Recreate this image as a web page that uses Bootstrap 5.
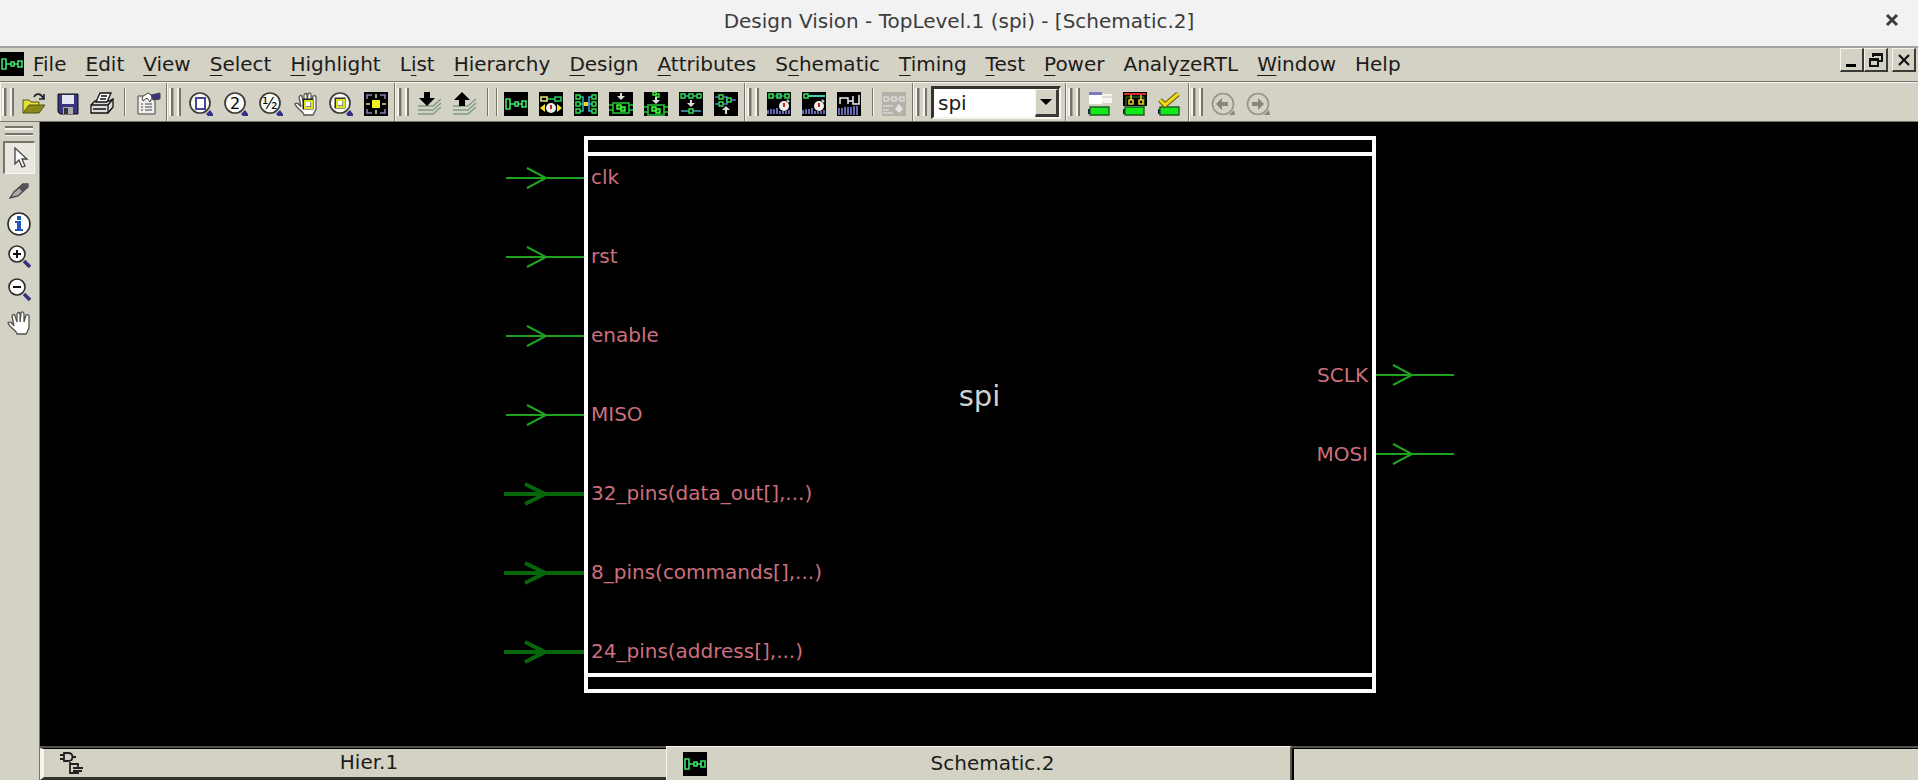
<!DOCTYPE html>
<html lang="en">
<head>
<meta charset="utf-8">
<meta name="viewport" content="width=device-width, initial-scale=1">
<title>Design Vision - TopLevel.1 (spi) - [Schematic.2]</title>
<link href="https://cdn.jsdelivr.net/npm/bootstrap@5.3.0/dist/css/bootstrap.min.css" rel="stylesheet">
<style>
:root{--face:#d4d1c5;--edge:#77756b;--hi:#f6f4ec}
body{font-family:"DejaVu Sans",sans-serif;font-size:20px;line-height:24px;color:#1c1c1a;background:var(--face)}
button{color:inherit;font:inherit}
svg{display:block;flex:none}
.titlebar{height:48px;background:#f2f2f2;border-bottom:2px solid #a3a3a3;color:#3c3c3c;padding-bottom:5px}
.titlebar h1{font-size:20px;line-height:24px}
.win-close{right:14px;top:8px}
.menubar{height:34px;border-bottom:1px solid var(--edge);padding-bottom:2px}
.menubar .nav-link{padding:0 10px 0 9px;color:#1c1c1a;line-height:24px}
.menubar u{text-underline-offset:4px;text-decoration-thickness:1px;text-decoration-skip-ink:none}
.mdi-set{padding-right:2px}
.mdi{width:24px;height:24px;background:var(--face);border:solid;border-width:1px 2px 2px 1px;border-color:var(--hi) #3a3a36 #3a3a36 var(--hi);padding:0}
.tool{background:none;border:0;padding:0;width:24px;height:24px;flex:none}
.toolbar{height:40px;border-top:1px solid var(--hi);border-bottom:1px solid var(--edge)}
.toolbar .tool{height:28px;padding-top:4px}
.group{border-right:1px solid var(--edge);padding:0 6px 0 4px;box-shadow:inset 1px 0 var(--hi)}
.tool-row{gap:11px}
.tool-row.tight{gap:10px}
.grip{width:10px;height:28px;flex:none;border:solid;border-width:0 2px;border-color:var(--edge);box-shadow:inset 1px 0 #a9a69b,inset -2px 0 var(--hi),-2px 0 var(--hi)}
.divide{width:2px;height:28px;flex:none;background:linear-gradient(90deg,var(--edge) 50%,var(--hi) 50%)}
.divide-pair{margin:0 6px 0 7px}
.combo{width:130px;height:33px;border:solid;border-width:3px 2px 2px 3px;border-color:#33332f var(--hi) var(--hi) #33332f;border-radius:0;font-size:20px;line-height:24px;padding:0 0 0 4px;background:#fff;appearance:none;color:#1c1c1a}
.combo-arrow{right:2px;top:3px;width:24px;height:28px;background:var(--face);border:solid;border-width:1px 3px 3px 1px;border-color:var(--hi) #3a3a36 #3a3a36 var(--hi);pointer-events:none}
.rail{width:40px;border-right:1px solid var(--edge);padding:4px 3px 0 2px}
.rail .handle{width:28px;height:9px;margin-bottom:6px;border:solid;border-width:2px 0;border-color:var(--edge);box-shadow:inset 0 2px var(--hi),0 1px var(--hi)}
.rail .tool{width:32px;height:33px;display:flex;align-items:center;justify-content:center}
.rail .tool.pressed{background:#e9e7df;border:solid;border-width:2px 1px 1px 2px;border-color:var(--edge) var(--hi) var(--hi) var(--edge)}
.canvas{background:#000;padding:14px 0 52px}
.module{width:792px;height:557px;border:4px solid #fff;color:#d0d0d0}
.stripe{height:16px}
.stripe-top{border-bottom:4px solid #fff}
.stripe-bottom{border-top:4px solid #fff}
.pins{display:grid;grid-auto-rows:28px;row-gap:51px;align-content:start;color:#cd6f7d;line-height:28px}
.wires-in{padding-top:28px}
.wires-out{padding-top:225px}
.names-in{padding:7px 0 0 3px}
.names-out{padding:205px 4px 0 0}
.cell-name{font-size:29px;line-height:36px;padding-bottom:38px}
.net{fill:none;stroke:#1fa31f;stroke-width:2}
.bus{fill:none;stroke:#07650a;stroke-width:4}
.tabs{height:34px;border-top:2px solid #55534e}
.tab{border:0;background:var(--face);padding:0 0 2px 28px}
.tab-back{border-top:1px solid #000;border-left:4px solid var(--hi);border-bottom:3px solid #33332e}
.tab-front{border-left:1px solid var(--hi);margin-top:-2px;border-top:1px solid var(--hi);border-right:2px solid #55534e}
.tab-rest{border-left:2px solid #000;border-top:1px solid #000}
.tab-icon{left:16px;top:2px}
.tab-front .tab-icon{top:5px}
</style>
</head>
<body class="d-flex flex-column min-vh-100">
<svg width="0" height="0" class="position-absolute" aria-hidden="true">
  <defs>
    <symbol id="i-schem" viewBox="0 0 24 24"><path fill="#000" d="M0 0h24v24H0z"/><path d="M2 7h4v10H2zM6 12h5M11 10h3v4h-3zM14 12h4M18 9h4v6h-4z" fill="none" stroke="#3be36b" stroke-width="1.6"/></symbol>
    <symbol id="i-lens" viewBox="0 0 24 24"><circle cx="11" cy="11" r="10" fill="#fbfbf6" stroke="#3b3b39" stroke-width="1.7"/><path d="M17 22l4-4 3 4v2h-5z" fill="#34308a"/></symbol>
    <symbol id="i-hand" viewBox="0 0 24 24"><path d="M10 23c0-3-7-6-9-11 2-2 4 0 6 3L5 5c1-2 3-2 3 0l2 6V3c1-2 3-2 3 0v8l1-9c1-2 3-1 3 1v8l2-7c2-1 3 0 3 2v11l-3 6z" fill="#fff" stroke="#55554f" stroke-width="1.3"/></symbol>
    <symbol id="i-clock" viewBox="0 0 24 24"><path d="M1 22v-4M4 22v-5M7 22v-5M10 22v-6M13 22v-3M16 22v-3M19 22v-3M22 22v-4" stroke="#6f74c4" stroke-width="1.8"/><circle cx="17" cy="14" r="5" fill="#eee"/><path d="M17 11v4" stroke="#c22" stroke-width="2"/><path d="M20 8l2 2" stroke="#ddd" stroke-width="2"/></symbol>
    <symbol id="i-cell" viewBox="0 0 24 24"><path d="M4 13h16v10H4zM0 15h4M0 20h4M20 15h4M20 20h4" fill="none" stroke="#21c838" stroke-width="1.6"/><path d="M8 15h4v4H8zM12 17h4v4h-4z" fill="#063" stroke="#4f3" stroke-width="1.4"/></symbol>
    <symbol id="i-battery" viewBox="0 0 24 24"><path d="M0 17h2v5H0z" fill="#124"/><path d="M2 15h19v8H2z" fill="#13e81b" stroke="#225a24" stroke-width="1.4"/></symbol>
    <symbol id="i-layers" viewBox="0 0 25 24"><path d="M1 14h15l8-7M1 18h15l8-7M1 22h15l8-7" fill="none" stroke="#7d9a88" stroke-width="1.3"/></symbol>
  </defs>
</svg>

<header class="titlebar position-relative d-flex align-items-center justify-content-center">
  <h1 class="m-0 fw-normal">Design Vision - TopLevel.1 (spi) - [Schematic.2]</h1>
  <button class="tool win-close position-absolute d-flex align-items-center justify-content-center" aria-label="Close window"><svg width="16" height="16" viewBox="0 0 16 16"><path d="M3 3l10 10M13 3L3 13" stroke="#3c3c3c" stroke-width="3"/></svg></button>
</header>

<nav class="menubar d-flex align-items-center" aria-label="Main menu">
  <svg width="24" height="24"><use href="#i-schem"/></svg>
  <div class="d-flex flex-grow-1">
    <a class="nav-link" href="#"><u>F</u>ile</a><a class="nav-link" href="#"><u>E</u>dit</a><a class="nav-link" href="#"><u>V</u>iew</a><a class="nav-link" href="#"><u>S</u>elect</a><a class="nav-link" href="#"><u>H</u>ighlight</a><a class="nav-link" href="#">L<u>i</u>st</a><a class="nav-link" href="#"><u>H</u>ierarchy</a><a class="nav-link" href="#"><u>D</u>esign</a><a class="nav-link" href="#"><u>A</u>ttributes</a><a class="nav-link" href="#">S<u>c</u>hematic</a><a class="nav-link" href="#"><u>T</u>iming</a><a class="nav-link" href="#"><u>T</u>est</a><a class="nav-link" href="#"><u>P</u>ower</a><a class="nav-link" href="#">Analy<u>z</u>eRTL</a><a class="nav-link" href="#"><u>W</u>indow</a><a class="nav-link" href="#">Help</a>
  </div>
  <div class="mdi-set d-flex align-self-start">
    <button class="mdi" aria-label="Minimize"><svg width="20" height="20"><path d="M5 14h10v3H5z"/></svg></button>
    <button class="mdi me-1" aria-label="Restore"><svg width="20" height="20" fill="none" stroke="#111" stroke-width="2"><path d="M8 7V4h9v7h-3M8 5h9M5 9h8v7H5zM5 10h8"/></svg></button>
    <button class="mdi" aria-label="Close"><svg width="20" height="20"><path d="M6 5l10 10M16 5L6 15" stroke="#111" stroke-width="2.2"/></svg></button>
  </div>
</nav>

<div class="toolbar d-flex" role="toolbar" aria-label="Tools">
  <div class="group d-flex align-items-center">
    <span class="grip me-2"></span>
    <div class="tool-row tight d-flex align-items-center">
    <button class="tool" aria-label="Open"><svg width="24" height="24" stroke="#555312"><path d="M1 21V8h6l2 2h8v4" fill="#e3df35"/><path d="M1 21l6-8h16l-6 8z" fill="#8b8a18"/><path d="M12 5c2-4 7-4 9 1M22 2v5h-5" fill="none" stroke="#222" stroke-width="1.6"/></svg></button>
    <button class="tool" aria-label="Save"><svg width="24" height="24"><path d="M2 2h20v20H4l-2-2z" fill="#38347f" stroke="#111"/><path d="M6 3h12v9H6z" fill="#e6e6f2"/><path d="M7 15h10v7H7z" fill="#aaa"/><path d="M8 16h4v6H8z" fill="#333"/></svg></button>
    <button class="tool" aria-label="Print"><svg width="24" height="24" stroke="#111" stroke-width="1.3"><path d="M1 13l4-4h14l4-2v8l-5 6H1z" fill="#ddd"/><path d="M6 10L10 1h11l-4 9z" fill="#fff"/><path d="M11 4h6M10 7h6M1 13h17v8M18 13l5-6M3 17h13" fill="none"/></svg></button>
    <span class="divide"></span>
    <button class="tool" aria-label="Properties"><svg width="25" height="24" stroke="#444"><path d="M2 4h17v18H2z" fill="#eee"/><path d="M5 12h2M9 12h7M5 15h2M9 15h7M5 18h2M9 18h7"/><path d="M6 5l6-4 5 3-3 6-3-4-4 3z" fill="#fff"/><path d="M15 3l9-2v6l-7 1z" fill="#38347f"/></svg></button>
    </div>
  </div>
  <div class="group d-flex align-items-center">
    <span class="grip me-2"></span>
    <div class="tool-row d-flex">
    <button class="tool" aria-label="Zoom full"><svg width="24" height="24"><use href="#i-lens"/><path d="M7 6h9v11H7z" fill="#fff" stroke="#49459a" stroke-width="2"/></svg></button>
    <button class="tool" aria-label="Zoom in 2x"><svg width="24" height="24"><use href="#i-lens"/><text x="6" y="17" font-size="16">2</text></svg></button>
    <button class="tool" aria-label="Zoom out 2x"><svg width="24" height="24"><use href="#i-lens"/><text x="3" y="17" font-size="16">½</text></svg></button>
    <button class="tool" aria-label="Pan to selection"><svg width="24" height="24"><use href="#i-hand"/><path d="M10 8h8v8h-8z" fill="#fff" stroke="#222" stroke-width="3"/><path d="M11 9h7v7h-7z" fill="none" stroke="#dbe41e" stroke-width="2"/></svg></button>
    <button class="tool" aria-label="Zoom to selection"><svg width="24" height="24"><use href="#i-lens"/><path d="M7 7h8v8H7z" fill="#fff" stroke="#333" stroke-width="3"/><path d="M8 8h7v7H8z" fill="none" stroke="#dbe41e" stroke-width="2"/></svg></button>
    <button class="tool" aria-label="Fit selection"><svg width="24" height="24"><path d="M0 0h24v24H0z"/><path d="M8 8h8v8H8z" fill="#f3f320"/><path d="M3 7V3h5M16 3h5v4M3 17v4h5M16 21h5v-4" fill="none" stroke="#8c83b8" stroke-width="1.5"/><path d="M12 2v4M12 18v4M2 12h4M18 12h4" stroke="#d8d3b8" stroke-width="1.5"/></svg></button>
    </div>
  </div>
  <div class="group d-flex align-items-center">
    <span class="grip me-2"></span>
    <div class="tool-row d-flex align-items-center">
    <button class="tool" aria-label="Push down"><svg width="25" height="24"><use href="#i-layers"/><path d="M7 0h6v6h5l-8 8-8-8h5z"/></svg></button>
    <button class="tool" aria-label="Pop up"><svg width="25" height="24"><use href="#i-layers"/><path d="M7 14h6V8h5l-8-8-8 8h5z"/></svg></button>
    <span class="divide"></span>
    </div>
    <span class="divide divide-pair"></span>
    <div class="tool-row d-flex">
    <button class="tool" aria-label="Schematic view"><svg width="24" height="24"><use href="#i-schem"/></svg></button>
    <button class="tool" aria-label="Path schematic"><svg width="24" height="24"><path d="M0 0h24v24H0z"/><path d="M2 5h6v4H2z" fill="none" stroke="#e9e57d" stroke-width="1.6"/><path d="M9 7h7M16 5h6v4h-6z" fill="none" stroke="#27c957" stroke-width="1.6"/><circle cx="12" cy="16" r="5" fill="#eee"/><path d="M12 13v4" stroke="#c22" stroke-width="2"/><path d="M1 16l5-4v8zM23 16l-5-4v8z" fill="#f3e42a"/></svg></button>
    <button class="tool" aria-label="Fan in and out"><svg width="24" height="24"><path d="M0 0h24v24H0z"/><path d="M5 5h4v14H5M19 5h-4v14h4M5 12h14" fill="none" stroke="#2cb8c6" stroke-width="1.5"/><path d="M2 3h4v4H2zM2 10h4v4H2zM2 17h4v4H2zM18 3h4v4h-4zM18 10h4v4h-4zM18 17h4v4h-4z" fill="#000" stroke="#2fe04c" stroke-width="1.4"/><path d="M10 10h4v4h-4z" fill="#f3d72a"/></svg></button>
    <button class="tool" aria-label="Into cell"><svg width="24" height="24"><path d="M0 0h24v24H0z"/><use href="#i-cell" y="-2"/><path d="M11 1h2v3h3l-4 4-4-4h3z" fill="#ddd"/></svg></button>
    <button class="tool" aria-label="Out of cell"><svg width="24" height="24"><path d="M0 0h24v24H0z"/><use href="#i-cell"/><path d="M9 0h3v3H9zM12 2h3v3h-3z" fill="none" stroke="#3e3" stroke-width="1.4"/><path d="M11 5h2v3h3l-4 4-4-4h3z" fill="#ddd"/></svg></button>
    <button class="tool" aria-label="Collapse nets"><svg width="24" height="24"><path d="M0 0h24v24H0z"/><path d="M4 4h16M2 19h20" stroke="#3fa7c9" stroke-width="1.5"/><path d="M2 2h4v4H2zM10 2h4v4h-4zM18 2h4v4h-4zM10 17h4v4h-4z" stroke="#2fe04c" stroke-width="1.4"/><path d="M11 8h2v3h3l-4 4-4-4h3z" fill="#ddd"/></svg></button>
    <button class="tool" aria-label="Expand nets"><svg width="24" height="24"><path d="M0 0h24v24H0z"/><path d="M1 5h4M1 12h4M9 5h4v7H9M13 8h9" stroke="#5577e0" stroke-width="1.5" fill="none"/><path d="M5 3h4v4H5zM5 10h4v4H5zM13 6h4v4h-4z" stroke="#2fe04c" stroke-width="1.4"/><path d="M11 22v-4H8l4-4 4 4h-3v4z" fill="#ddd"/></svg></button>
    </div>
  </div>
  <div class="group d-flex align-items-center">
    <span class="grip me-2"></span>
    <div class="tool-row d-flex align-items-center">
    <button class="tool" aria-label="Path timing"><svg width="24" height="24"><path d="M0 0h24v24H0z"/><path d="M5 4h14" stroke="#3fa7c9"/><path d="M2 2h4v4H2zM10 2h4v4h-4zM18 2h4v4h-4z" fill="none" stroke="#2fe04c" stroke-width="1.5"/><use href="#i-clock"/></svg></button>
    <button class="tool" aria-label="Net timing"><svg width="24" height="24"><path d="M0 0h24v24H0z"/><path d="M6 4h17" stroke="#3bd0b0" stroke-width="2"/><path d="M2 2h4v4H2z" fill="none" stroke="#2fe04c" stroke-width="1.5"/><use href="#i-clock"/></svg></button>
    <button class="tool" aria-label="Waveform"><svg width="24" height="24"><path d="M0 0h24v24H0z"/><path d="M3 12V6h8v6M11 9h5M16 4v8h6V3" fill="none" stroke="#eee" stroke-width="1.5"/><path d="M2 23v-7M5 23v-7M8 23v-8M11 23v-8M14 23v-8M17 23v-9M20 23v-9" stroke="#6f74c4" stroke-width="1.8"/></svg></button>
    <span class="divide"></span>
    </div>
    <button class="tool ms-2" disabled aria-label="Report"><svg width="24" height="24"><path fill="#b3b1aa" d="M0 0h24v24H0z"/><path d="M2 5h4v4H2zM10 5h4v4h-4zM18 5h4v4h-4zM6 7h4M14 7h4M1 14h10M1 18h6M1 21h10" fill="none" stroke="#d9d7cf" stroke-width="1.5"/><path d="M17 12l4 5-4 4-4-4z" fill="#e6e4dc"/></svg></button>
  </div>
  <div class="group pe-1 d-flex align-items-center">
    <span class="grip me-1"></span>
    <div class="position-relative">
      <select class="combo d-block" aria-label="Current design"><option>spi</option></select>
      <span class="combo-arrow position-absolute"><svg width="20" height="24"><path d="M4 9h12l-6 6z"/></svg></span>
    </div>
  </div>
  <div class="group d-flex align-items-center">
    <span class="grip me-2"></span>
    <div class="tool-row d-flex">
    <button class="tool" aria-label="Power windows"><svg width="24" height="24"><path d="M1 0h13v12H1z" fill="#fff"/><path d="M1 0h13v3H1z" fill="#7f79c3"/><path d="M14 2h10v9H14z" fill="#f5f5f2"/><path d="M14 5h10" stroke="#c6c4bb"/><use href="#i-battery"/></svg></button>
    <button class="tool" aria-label="Power domains"><svg width="24" height="24"><path d="M0 0h24v14H0z"/><path d="M1 2h22" stroke="#d42e20" stroke-width="2"/><path d="M3 15V5h18v10" stroke="#2c8f30" fill="none"/><path d="M8 3v5M18 3v5M6 8h4v4H6zM16 8h4v4h-4z" fill="none" stroke="#edc72a" stroke-width="1.6"/><use href="#i-battery"/></svg></button>
    <button class="tool" aria-label="Check power"><svg width="24" height="24"><use href="#i-battery"/><path d="M2 8l5 5L20 2" fill="none" stroke="#665b0c" stroke-width="5"/><path d="M2 8l5 5L20 2" fill="none" stroke="#f1dc17" stroke-width="3"/></svg></button>
    </div>
  </div>
  <div class="group border-end-0 d-flex align-items-center">
    <span class="grip me-2"></span>
    <div class="tool-row d-flex">
    <button class="tool" disabled aria-label="Back"><svg width="24" height="24"><circle cx="12" cy="12" r="10.500" fill="none" stroke="#96948a" stroke-width="1.6"/><path d="M5 12l6-6v4h6v4h-6v4zM18 23l5-5 1 5z" fill="#88867d"/></svg></button>
    <button class="tool" disabled aria-label="Forward"><svg width="24" height="24"><circle cx="12" cy="12" r="10.500" fill="none" stroke="#96948a" stroke-width="1.6"/><path d="M18 12l-6-6v4H6v4h6v4zM18 23l5-5 1 5z" fill="#88867d"/></svg></button>
    </div>
  </div>
</div>

<div class="d-flex flex-grow-1">
  <aside class="rail d-flex flex-column align-items-center flex-shrink-0">
    <span class="handle"></span>
    <button class="tool pressed" aria-label="Select"><svg width="24" height="24"><path d="M7 2v16l4-4 3 7 3-1-3-7h5z" fill="#fff" stroke="#444" stroke-width="1.3"/></svg></button>
    <button class="tool" aria-label="Highlight"><svg width="24" height="24"><path d="M3 19l4-6 9-8h5v3l-10 9z" fill="#aaa" stroke="#444" stroke-width="1.3"/><path d="M12 9l3 4 6-5V5h-4z" fill="#55525c"/></svg></button>
    <button class="tool" aria-label="Information"><svg width="26" height="26" viewBox="0 0 26 26"><circle cx="13" cy="13" r="11" fill="#fff" stroke="#2d2d2b" stroke-width="1.6"/><path d="M11 5h4v4h-4zM9 10h6v8h2v2H9v-2h2v-6H9z" fill="#2458b8"/></svg></button>
    <button class="tool" aria-label="Zoom in"><svg width="26" height="26" viewBox="0 0 26 26"><circle cx="11" cy="10" r="8" fill="#fff" stroke="#2d2d2b" stroke-width="1.6"/><path d="M7 10h8M11 6v8" stroke="#111" stroke-width="2"/><path d="M18 17l6 6" stroke="#37327f" stroke-width="3.500"/></svg></button>
    <button class="tool" aria-label="Zoom out"><svg width="26" height="26" viewBox="0 0 26 26"><circle cx="11" cy="10" r="8" fill="#fff" stroke="#2d2d2b" stroke-width="1.6"/><path d="M7 10h8" stroke="#111" stroke-width="2"/><path d="M18 17l6 6" stroke="#37327f" stroke-width="3.500"/></svg></button>
    <button class="tool" aria-label="Pan"><svg width="24" height="24"><use href="#i-hand"/></svg></button>
  </aside>

  <div class="flex-grow-1 d-flex flex-column">
    <main class="canvas flex-grow-1 d-flex justify-content-center align-items-start">
      <div class="pins wires-in">
        <svg width="80" height="28"><path class="net" d="M2 14h78M23 4l19 10-19 10"/></svg>
        <svg width="80" height="28"><path class="net" d="M2 14h78M23 4l19 10-19 10"/></svg>
        <svg width="80" height="28"><path class="net" d="M2 14h78M23 4l19 10-19 10"/></svg>
        <svg width="80" height="28"><path class="net" d="M2 14h78M23 4l19 10-19 10"/></svg>
        <svg width="80" height="28"><path class="bus" d="M0 14h80M21 4l20 10-20 10"/></svg>
        <svg width="80" height="28"><path class="bus" d="M0 14h80M21 4l20 10-20 10"/></svg>
        <svg width="80" height="28"><path class="bus" d="M0 14h80M21 4l20 10-20 10"/></svg>
      </div>
      <section class="module d-flex flex-column" aria-label="spi">
        <div class="stripe stripe-top"></div>
        <div class="flex-grow-1 d-flex">
          <div class="pins names-in col">
            <span>clk</span><span>rst</span><span>enable</span><span>MISO</span><span>32_pins(data_out[],...)</span><span>8_pins(commands[],...)</span><span>24_pins(address[],...)</span>
          </div>
          <div class="cell-name align-self-center">spi</div>
          <div class="pins names-out col text-end">
            <span>SCLK</span><span>MOSI</span>
          </div>
        </div>
        <div class="stripe stripe-bottom"></div>
      </section>
      <div class="pins wires-out">
        <svg width="78" height="28"><path class="net" d="M0 14h78M17 4l19 10-19 10"/></svg>
        <svg width="78" height="28"><path class="net" d="M0 14h78M17 4l19 10-19 10"/></svg>
      </div>
    </main>
    <div class="tabs row g-0" role="tablist">
      <button class="tab tab-back col-4 position-relative" role="tab">
        <svg class="tab-icon position-absolute" width="24" height="24" fill="none" stroke="#222" stroke-width="1.8"><path d="M4 2h4c6 0 6 8 0 8H4zM0 4h4M0 8h4M12 6h4M10 11v11h9M10 13h8v4h5M13 20h9M13 17h10"/></svg>
        Hier.1</button>
      <button class="tab tab-front col-4 position-relative" role="tab" aria-selected="true">
        <svg class="tab-icon position-absolute" width="24" height="24"><use href="#i-schem"/></svg>
        Schematic.2</button>
      <div class="tab-rest col"></div>
    </div>
  </div>
</div>
<script src="https://cdn.jsdelivr.net/npm/bootstrap@5.3.0/dist/js/bootstrap.bundle.min.js"></script>
</body>
</html>
